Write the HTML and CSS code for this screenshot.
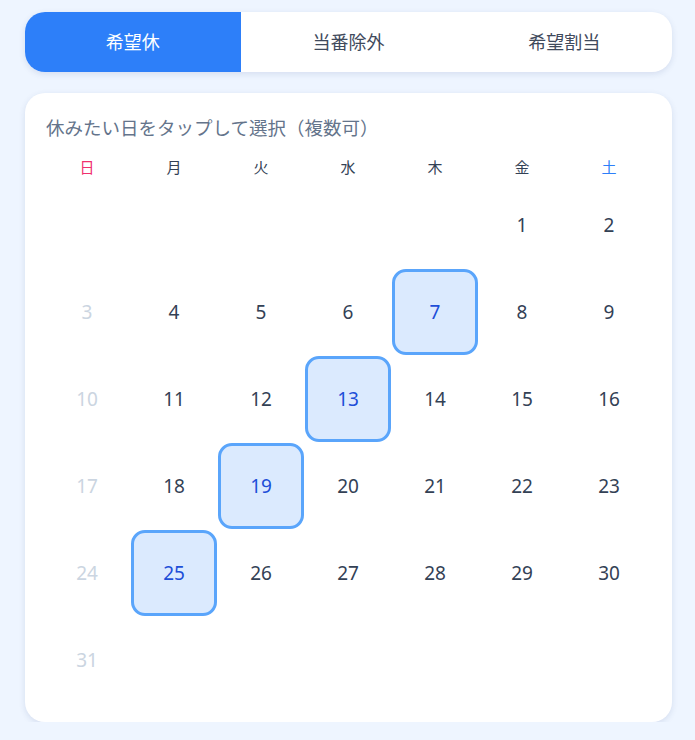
FILE: index.html
```html
<!DOCTYPE html>
<html lang="ja">
<head>
  <meta charset="UTF-8">
  <meta name="viewport" content="width=device-width, initial-scale=1.0">
  <title>希望休</title>
  <link rel="stylesheet" href="styles.css">
</head>
<body>
  <div class="page">
    <div class="tabs">
      <button class="tab active">希望休</button>
      <button class="tab">当番除外</button>
      <button class="tab">希望割当</button>
    </div>

    <div class="card">
      <div class="hint">休みたい日をタップして選択（複数可）</div>
      <div class="week">
        <div class="sun">日</div>
        <div>月</div>
        <div>火</div>
        <div>水</div>
        <div>木</div>
        <div>金</div>
        <div class="sat">土</div>
      </div>
      <div class="days" id="days"></div>
    </div>
  </div>

  <script>
    const selected = [7, 13, 19, 25];
    const firstWeekday = 5;
    const daysInMonth = 31;
    const days = document.getElementById("days");

    for (let i = 0; i < firstWeekday; i++) {
      const blank = document.createElement("div");
      blank.className = "day empty";
      days.appendChild(blank);
    }

    for (let d = 1; d <= daysInMonth; d++) {
      const cell = document.createElement("div");
      cell.className = "day";
      if ((firstWeekday + d - 1) % 7 === 0) cell.classList.add("off");
      if (selected.includes(d)) cell.classList.add("picked");
      cell.textContent = d;
      cell.onclick = () => {
        if (!cell.classList.contains("off")) cell.classList.toggle("picked");
      };
      days.appendChild(cell);
    }
  </script>
</body>
</html>
```

FILE: styles.css
```css
body {
  margin: 0;
  background-color: #eef5ff;
  font-family: "Noto Sans CJK JP", "Noto Sans", sans-serif;
  color: #334155;
}

.page {
  padding: 12px 23px 0 25px;
  display: flex;
  flex-direction: column;
  gap: 21px;
}

.tabs {
  display: flex;
  height: 60px;
  background: #ffffff;
  border-radius: 20px;
  overflow: hidden;
  box-shadow: 0 2px 6px rgba(30, 60, 120, 0.12);
}

.tab {
  flex: 1;
  border: none;
  background: transparent;
  font-family: inherit;
  font-size: 18px;
  color: #3f4a5c;
  cursor: pointer;
  padding: 0 0 3px;
}

.tab.active {
  background: #2d7ff9;
  color: #ffffff;
}

.card {
  background: #ffffff;
  border-radius: 20px;
  padding: 20px 19px 19px 19px;
  box-shadow: 0 2px 6px rgba(30, 60, 120, 0.12);
}

.hint {
  font-size: 18.5px;
  line-height: 28px;
  color: #64748b;
  padding-left: 2px;
}

.week {
  display: grid;
  grid-template-columns: repeat(7, 86px);
  gap: 1px;
  margin-top: 14px;
  font-size: 15px;
  line-height: 24px;
  text-align: center;
  color: #334155;
}

.week .sun {
  color: #f0306e;
}

.week .sat {
  color: #2d7ff9;
}

.days {
  display: grid;
  grid-template-columns: repeat(7, 86px);
  grid-auto-rows: 86px;
  gap: 1px;
  margin-top: 3px;
}

.day {
  display: flex;
  justify-content: center;
  align-items: center;
  font-family: "Noto Sans", sans-serif;
  font-size: 19px;
  color: #334155;
  border-radius: 14px;
  box-sizing: border-box;
  cursor: pointer;
}

.day.off {
  color: #cbd5e1;
  cursor: default;
}

.day.picked {
  background: #dbeafe;
  border: 3px solid #5aa5fb;
  color: #1d4ed8;
}
```
